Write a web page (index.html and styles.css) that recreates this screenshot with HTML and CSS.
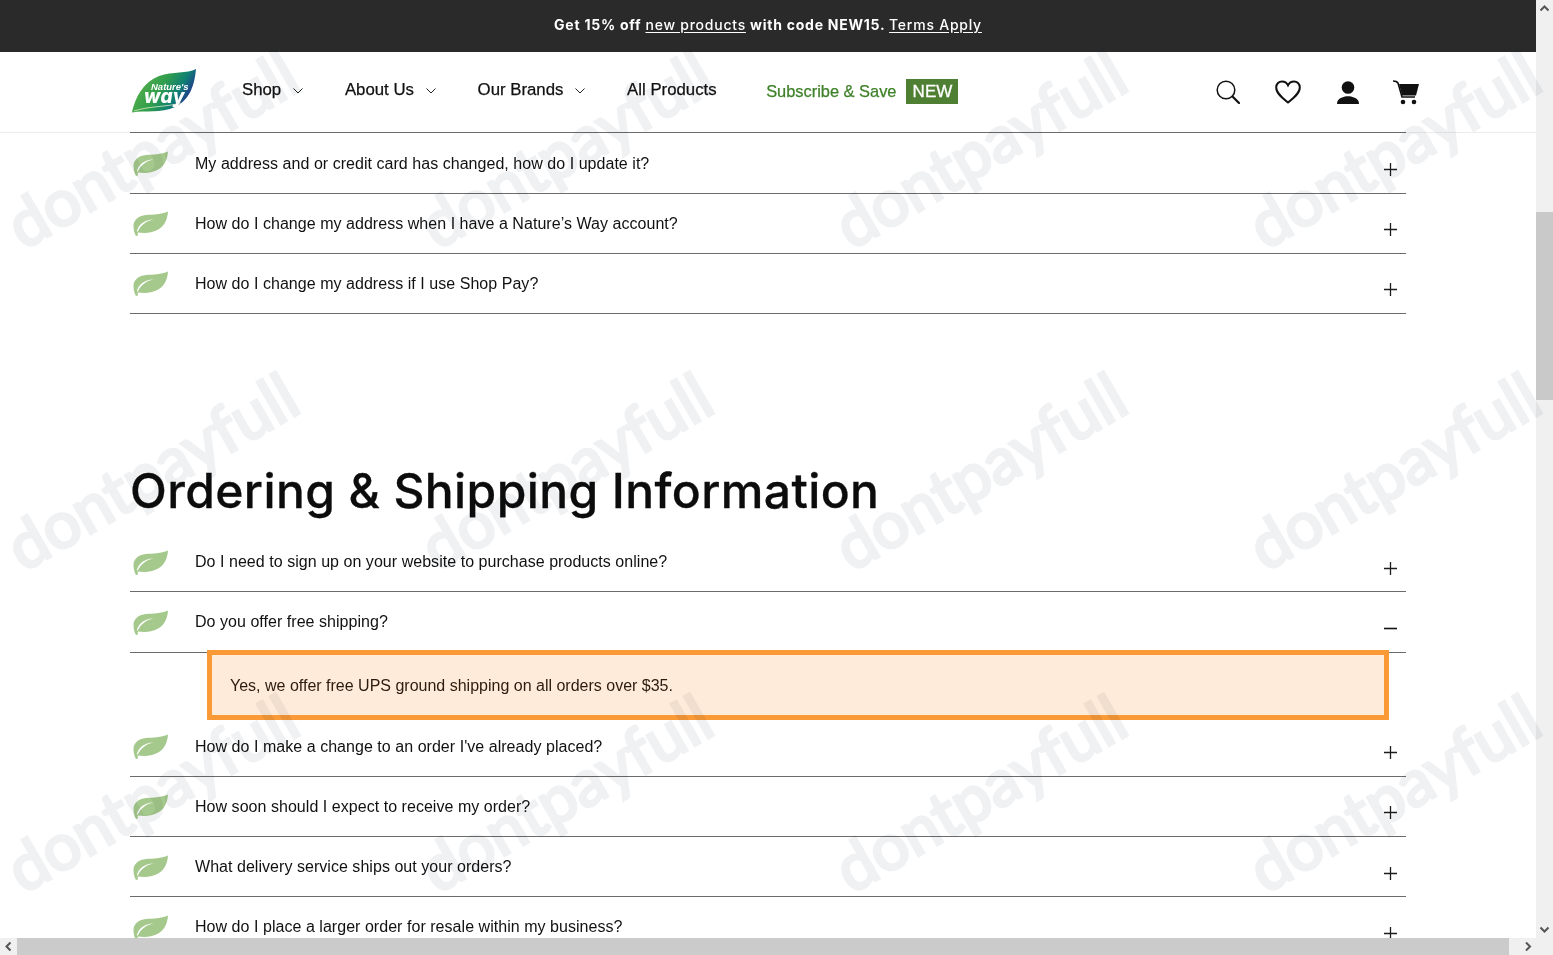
FILE: index.html
```html
<!DOCTYPE html>
<html lang="en">
<head>
<meta charset="utf-8">
<title>Nature's Way FAQ</title>
<link rel="stylesheet" href="styles.css">
</head>
<body>
<svg class="defs" width="0" height="0" aria-hidden="true">
  <defs>
    <symbol id="leaf" viewBox="0 0 36 26">
      <path fill="#a5c98c" d="M35 .5 C28 3.5 20 3.5 13 4 C5 5 .5 9 .5 15 C.5 19 1.5 22.5 3 25 L5 24.5 C4.5 23.5 4.5 22.5 5 21.5 C12 22.5 20 22 26 18 C32 14 34.5 8 35 .5 Z"/>
      <path fill="#fff" d="M3.8 20.5 C5.5 13.5 11 9 20.5 8.5 C13 10 8 14 4.8 20.5 Z"/>
    </symbol>
    <symbol id="plus" viewBox="0 0 13 13">
      <path stroke="#1c1c1c" stroke-width="1.3" d="M0 6.5 H13 M6.5 0 V13"/>
    </symbol>
    <symbol id="minus" viewBox="0 0 13 13">
      <path stroke="#111" stroke-width="1.6" d="M0 6.5 H13"/>
    </symbol>
    <symbol id="chev" viewBox="0 0 10 6">
      <path fill="none" stroke="#222" stroke-width="1" d="M.5 .5 L5 5 L9.5 .5"/>
    </symbol>
    <linearGradient id="logoGrad" x1="0" y1="0" x2="1" y2="0.4">
      <stop offset="0" stop-color="#6ab947"/>
      <stop offset=".55" stop-color="#2f9d4e"/>
      <stop offset=".8" stop-color="#0f7f74"/>
      <stop offset="1" stop-color="#23358f"/>
    </linearGradient>
  </defs>
</svg>
<div class="window">
  <div class="viewport">
    <div class="promo">
      <span>Get 15% off <a class="promo-link">new products</a> with code NEW15. <a class="promo-link">Terms Apply</a></span>
    </div>
    <header class="nav">
      <svg class="logo" width="66" height="46" viewBox="0 0 66 46">
        <path fill="url(#logoGrad)" d="M1 44.5 C4 31 11 15 28 8 C42 3 56 6 65 1 C63.5 17 59 32 44 39 C30 45.5 14 42 1 44.5 Z"/>
        <path fill="none" stroke="#d8eec0" stroke-width=".8" d="M3 43 C18 38 36 39 50 35"/>
        <text class="logo-small" x="20" y="21.5">Nature's</text>
        <text class="logo-big" x="13" y="34.5">way</text>
      </svg>
      <nav class="menu">
        <a class="menu-item">Shop<svg class="chev" width="10" height="6"><use href="#chev"/></svg></a>
        <a class="menu-item">About Us<svg class="chev" width="10" height="6"><use href="#chev"/></svg></a>
        <a class="menu-item">Our Brands<svg class="chev" width="10" height="6"><use href="#chev"/></svg></a>
        <a class="menu-item">All Products</a>
      </nav>
      <a class="subscribe">Subscribe &amp; Save<span class="badge">NEW</span></a>
      <div class="tools">
        <svg width="24" height="24" viewBox="0 0 24 24"><circle cx="10" cy="10" r="8.8" fill="none" stroke="#111" stroke-width="1.5"/><path stroke="#111" stroke-width="2.2" stroke-linecap="round" d="M16.5 16.5 L23 23"/></svg>
        <svg width="26" height="24" viewBox="0 0 26 24"><path fill="none" stroke="#111" stroke-width="2" d="M13 22.5 C8 18.5 1.2 13.5 1.2 7.5 C1.2 3.8 4 1.4 7 1.4 C9.5 1.4 11.8 2.8 13 5.2 C14.2 2.8 16.5 1.4 19 1.4 C22 1.4 24.8 3.8 24.8 7.5 C24.8 13.5 18 18.5 13 22.5 Z"/></svg>
        <svg class="tool-person" width="22" height="23" viewBox="0 0 22 23"><circle cx="11" cy="6.5" r="6.3" fill="#111"/><path fill="#111" d="M0 23 C0 18 4 16.5 8 15.5 C10 15 12 15 14 15.5 C18 16.5 22 18 22 23 Z"/></svg>
        <svg width="26" height="25" viewBox="0 0 26 25"><path fill="none" stroke="#111" stroke-width="1.6" d="M0 1 C2 1 4 1.4 5 3 L9 17 H22"/><path fill="#111" d="M6 4 H26 L23 15.5 H9 Z"/><circle cx="10" cy="22" r="2.3" fill="#111"/><circle cx="21" cy="22" r="2.3" fill="#111"/></svg>
      </div>
    </header>
    <main class="content">
      <section class="faq faq-first">
        <div class="row"><svg class="leaf"><use href="#leaf"/></svg><span class="q">My address and or credit card has changed, how do I update it?</span><svg class="toggle"><use href="#plus"/></svg></div>
        <div class="row"><svg class="leaf"><use href="#leaf"/></svg><span class="q">How do I change my address when I have a Nature’s Way account?</span><svg class="toggle"><use href="#plus"/></svg></div>
        <div class="row"><svg class="leaf"><use href="#leaf"/></svg><span class="q">How do I change my address if I use Shop Pay?</span><svg class="toggle"><use href="#plus"/></svg></div>
      </section>
      <section class="faq faq-second">
        <h2 class="faq-title">Ordering &amp; Shipping Information</h2>
        <div class="row"><svg class="leaf"><use href="#leaf"/></svg><span class="q">Do I need to sign up on your website to purchase products online?</span><svg class="toggle"><use href="#plus"/></svg></div>
        <div class="row"><svg class="leaf"><use href="#leaf"/></svg><span class="q">Do you offer free shipping?</span><svg class="toggle"><use href="#minus"/></svg></div>
        <div class="answer"><div class="highlight"></div><p class="answer-text">Yes, we offer free UPS ground shipping on all orders over $35.</p></div>
        <div class="row"><svg class="leaf"><use href="#leaf"/></svg><span class="q">How do I make a change to an order I've already placed?</span><svg class="toggle"><use href="#plus"/></svg></div>
        <div class="row"><svg class="leaf"><use href="#leaf"/></svg><span class="q">How soon should I expect to receive my order?</span><svg class="toggle"><use href="#plus"/></svg></div>
        <div class="row"><svg class="leaf"><use href="#leaf"/></svg><span class="q">What delivery service ships out your orders?</span><svg class="toggle"><use href="#plus"/></svg></div>
        <div class="row"><svg class="leaf"><use href="#leaf"/></svg><span class="q">How do I place a larger order for resale within my business?</span><svg class="toggle"><use href="#plus"/></svg></div>
      </section>
    </main>
  </div>
  <div class="vbar">
    <svg class="arrow" width="17" height="17" viewBox="0 0 17 17"><path fill="none" stroke="#555" stroke-width="2" d="M4.5 10.5 L8.5 6.5 L12.5 10.5"/></svg>
    <div class="vbar-track"><div class="vbar-thumb"></div></div>
    <svg class="arrow" width="17" height="17" viewBox="0 0 17 17"><path fill="none" stroke="#555" stroke-width="2" d="M4.5 6.5 L8.5 10.5 L12.5 6.5"/></svg>
  </div>
  <div class="hbar">
    <svg class="arrow" width="17" height="17" viewBox="0 0 17 17"><path fill="none" stroke="#555" stroke-width="2" d="M10.5 4.5 L6.5 8.5 L10.5 12.5"/></svg>
    <div class="hbar-thumb"></div>
    <svg class="arrow" width="27" height="17" viewBox="0 0 27 17"><path fill="none" stroke="#555" stroke-width="2" d="M17 4.5 L21 8.5 L17 12.5"/></svg>
  </div>
  <div class="corner"></div>
</div>
<div class="watermarks" aria-hidden="true">
  <span>dontpayfull</span><span>dontpayfull</span><span>dontpayfull</span><span>dontpayfull</span>
  <span>dontpayfull</span><span>dontpayfull</span><span>dontpayfull</span><span>dontpayfull</span>
  <span>dontpayfull</span><span>dontpayfull</span><span>dontpayfull</span><span>dontpayfull</span>
</div>
</body>
</html>
```
FILE: styles.css
```css
* { box-sizing: border-box; }
html, body { margin: 0; height: 100%; overflow: hidden; background: #fff; }
body { font-family: "Liberation Sans", Arial, sans-serif; color: #111; }
.defs { position: absolute; }

.window {
  display: grid;
  grid-template-columns: 1536px 17px;
  grid-template-rows: 938px 17px;
  width: 1553px;
  height: 955px;
}
.viewport { overflow: hidden; background: #fff; }

/* promo bar */
.promo {
  height: 52px;
  background: #2a2a2a;
  color: #fff;
  display: flex;
  align-items: center;
  justify-content: center;
  font-family: Inter, sans-serif;
  font-size: 14px;
  font-weight: 700;
  letter-spacing: .76px;
  padding-bottom: 3px;
}
.promo-link { text-decoration: underline; font-weight: 500; text-underline-offset: 2px; }

/* nav */
.nav {
  height: 81px;
  display: flex;
  align-items: center;
  padding: 0 117px 0 130px;
  border-bottom: 1px solid #ececec;
}
.logo { flex: none; margin: -2px 45px 0 1px; }
.logo-small { font: italic 700 9.5px "Liberation Sans", sans-serif; fill: #fff; }
.logo-big { font: italic 800 19px Inter, sans-serif; fill: #fff; letter-spacing: .4px; }
.menu { display: flex; gap: 42px; padding-bottom: 5px; }
.menu-item {
  display: flex;
  align-items: center;
  font-size: 16.8px;
  color: #111;
  -webkit-text-stroke: .25px #111;
}
.chev { margin: 3px 0 0 11.7px; }
.subscribe {
  display: flex;
  align-items: center;
  margin-left: 49.5px;
  color: #3f8129;
  font-size: 16.4px;
  -webkit-text-stroke: .25px #3f8129;
  padding-bottom: 1px;
}
.badge {
  margin-left: 10px;
  width: 52px;
  height: 25px;
  background: #4f7f33;
  color: #fff;
  font-size: 17px;
  display: flex;
  align-items: center;
  justify-content: center;
  -webkit-text-stroke: .3px #fff;
}
.tools { margin-left: auto; display: flex; align-items: center; gap: 35px; }
.tool-person { margin: 0 -1px 0 1px; }

/* faq */
.content { width: 1276px; margin: 0 auto; }
.faq-first { margin-top: -1px; border-top: 1px solid #6b6b6b; padding-top: 1px; }
.faq-title {
  margin: 147px 0 10.9px;
  font-family: Inter, sans-serif;
  font-weight: 500;
  font-size: 48px;
  line-height: 60px;
  letter-spacing: .39px;
  color: #0c0c0c;
  -webkit-text-stroke: .3px #0c0c0c;
}
.row {
  height: 60.1px;
  display: flex;
  align-items: flex-start;
  padding-top: 17px;
  border-bottom: 1px solid #6b6b6b;
}
.faq-second .row { height: 60.2px; padding-top: 17.5px; }
.leaf { flex: none; width: 36px; height: 26px; margin: 0 26px 0 3px; }
.q { font-size: 16px; line-height: 22px; margin-top: 2px; color: #111; letter-spacing: .04px; }
.faq-second .q { margin-top: 1.5px; }
.toggle { flex: none; width: 13px; height: 13px; margin: 12px 9px 0 auto; }

.answer { position: relative; height: 64.1px; }
.highlight {
  position: absolute;
  inset: -3px 17px -3.3px 77px;
  background: #ffebd9;
  border: 5px solid #f99a37;
}
.answer-text {
  position: relative;
  margin: 0;
  padding: 22px 0 0 100px;
  font-size: 16px;
  line-height: 22px;
  color: #2a1c10;
}

/* scrollbars */
.vbar { background: #f0f0f0; display: flex; flex-direction: column; }
.vbar-track { flex: 1; padding-top: 195px; }
.vbar-thumb { height: 188px; background: #c9c9c9; }
.hbar { background: #f0f0f0; display: flex; }
.hbar-thumb { width: 1492px; background: #cbcbcb; flex: none; }
.arrow { flex: none; display: block; }
.corner { background: #f0f0f0; }

/* watermark overlay */
.watermarks {
  position: absolute;
  left: -56px;
  top: -13px;
  display: grid;
  grid-template-columns: repeat(4, 414px);
  grid-auto-rows: 322px;
  pointer-events: none;
  mix-blend-mode: multiply;
}
.watermarks span {
  display: flex;
  align-items: center;
  justify-content: center;
  font-family: Lato, sans-serif;
  font-size: 65px;
  color: #f0f1f3;
  -webkit-text-stroke: 3px #f0f1f3;
  white-space: nowrap;
  transform: rotate(-30deg);
}
```
